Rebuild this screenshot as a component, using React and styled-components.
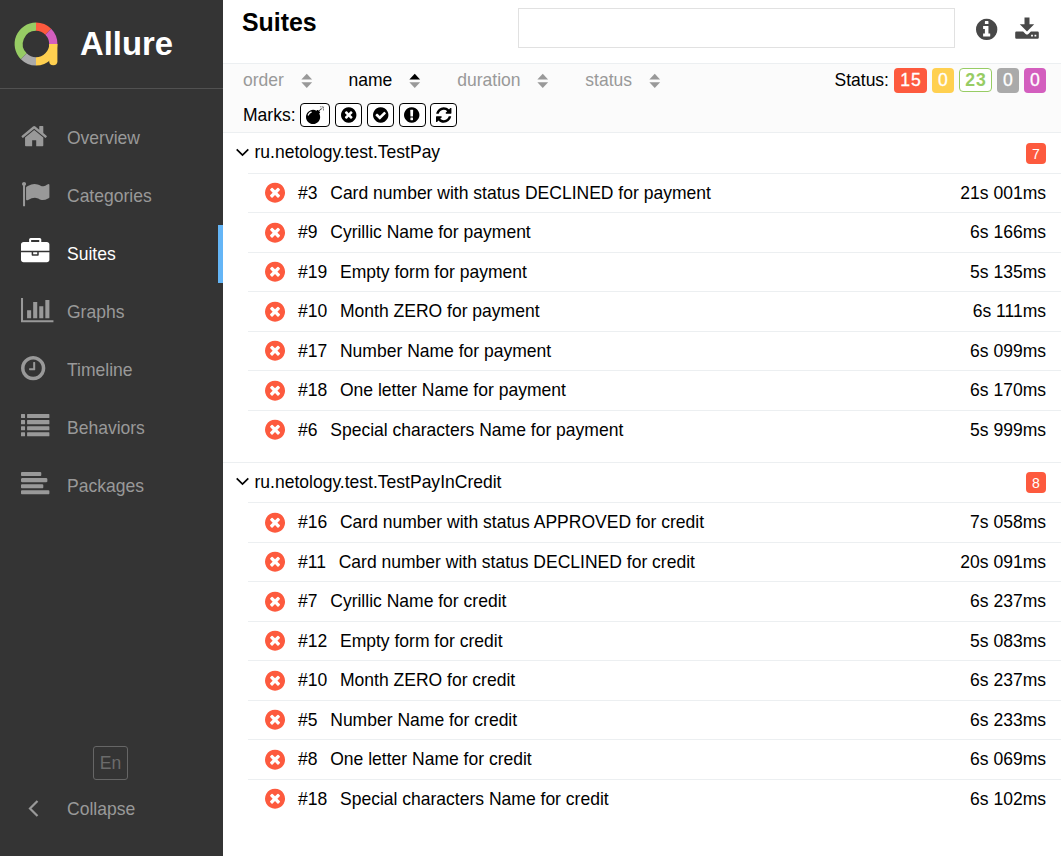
import React from 'react';
import styled, { createGlobalStyle } from 'styled-components';

const RED = '#fd5a3e';
const YELLOW = '#ffd050';
const GREEN = '#97cc64';
const GRAY = '#aaaaaa';
const PURPLE = '#d35ebe';

const GlobalStyle = createGlobalStyle`
  * { box-sizing: border-box; }
  body { margin: 0; background: #fff; }
  body, button, input { font-family: "Liberation Sans", Arial, sans-serif; }
`;

const DISC = 'M1664 896q0 209-103 385.5t-279.5 279.5-385.5 103-385.5-103-279.5-279.5-103-385.5 103-385.5 279.5-279.5 385.5-103 385.5 103 279.5 279.5 103 385.5z';

/* x = left edge of the glyph box, w = its advance, both on a 1792-unit em */
const GLYPHS = {
  home: { x: 64, w: 1664, d: 'M1472 992v480q0 26-19 45t-45 19h-384v-384h-256v384h-384q-26 0-45-19t-19-45v-480q0-1 .5-3t.5-3l575-474 575 474q1 2 1 6zm223-69l-62 74q-8 9-21 11h-3q-13 0-21-7l-692-577-692 577q-12 8-24 7-13-2-21-11l-62-74q-8-10-7-23.5t11-21.5l719-599q32-26 76-26t76 26l244 204v-195q0-14 9-23t23-9h192q14 0 23 9t9 23v408l219 182q10 8 11 21.5t-7 23.5z' },
  flag: { x: 0, w: 1792, d: 'M320 256q0 72-64 110v1266q0 13-9.5 22.5t-22.5 9.5h-64q-13 0-22.5-9.5t-9.5-22.5v-1266q-64-38-64-110 0-53 37.5-90.5t90.5-37.5 90.5 37.5 37.5 90.5zm1472 64v763q0 25-12.5 38.5t-39.5 27.5q-215 116-369 116-61 0-123.5-22t-108.5-48-115.5-48-142.5-22q-192 0-464 146-17 9-33 9-26 0-45-19t-19-45v-742q0-32 31-55 21-14 79-43 236-120 421-120 107 0 200 29t219 88q38 19 88 19 54 0 117.5-21t110-47 88-47 54.5-21q26 0 45 19t19 45z' },
  briefcase: { x: 0, w: 1792, d: 'M640 256h512v-128h-512v128zm1152 640v480q0 66-47 113t-113 47h-1472q-66 0-113-47t-47-113v-480h672v160q0 26 19 45t45 19h320q26 0 45-19t19-45v-160h672zm-768 0v128h-256v-128h256zm768-480v384h-1792v-384q0-66 47-113t113-47h352v-160q0-40 28-68t68-28h576q40 0 68 28t28 68v160h352q66 0 113 47t47 113z' },
  chart: { x: 0, w: 2048, d: 'M640 896v512h-256v-512h256zm384-512v1024h-256v-1024h256zm1024 1152v128h-2048v-1536h128v1408h1920zm-640-896v768h-256v-768h256zm384-384v1152h-256v-1152h256z' },
  clock: { x: 128, w: 1536, d: 'M1024 544v448q0 14-9 23t-23 9h-320q-14 0-23-9t-9-23v-64q0-14 9-23t23-9h224v-352q0-14 9-23t23-9h64q14 0 23 9t9 23zm416 352q0-148-73-273t-198-198-273-73-273 73-198 198-73 273 73 273 198 198 273 73 273-73 198-198 73-273zM' + DISC.slice(1) },
  list: { x: 0, w: 1792, d: [192, 576, 960, 1344].map((y) => `M32 ${y - 64}h192q32 0 32 32v192q0 32-32 32h-192q-32 0-32-32v-192q0-32 32-32zM416 ${y - 64}h1344q32 0 32 32v192q0 32-32 32h-1344q-32 0-32-32v-192q0-32 32-32z`).join('') },
  align: { x: 0, w: 1792, d: 'M1792 1344v128q0 26-19 45t-45 19h-1664q-26 0-45-19t-19-45v-128q0-26 19-45t45-19h1664q26 0 45 19t19 45zm-384-384v128q0 26-19 45t-45 19h-1280q-26 0-45-19t-19-45v-128q0-26 19-45t45-19h1280q26 0 45 19t19 45zm256-384v128q0 26-19 45t-45 19h-1536q-26 0-45-19t-19-45v-128q0-26 19-45t45-19h1536q26 0 45 19t19 45zm-384-384v128q0 26-19 45t-45 19h-1152q-26 0-45-19t-19-45v-128q0-26 19-45t45-19h1152q26 0 45 19t19 45z' },
  bomb: { x: 0, w: 1792, spark: 'M1390 80H1740V450M1440 390 1740 90', d: 'M571 589q-10-25-34-35t-49 0q-108 44-191 127t-127 191q-10 25 0 49t35 34q13 5 24 5 42 0 60-40 34-84 98.5-148.5t148.5-98.5q25-11 35-35t0-49zm942-356l46 46-244 243 68 68q19 19 19 45.5t-19 45.5l-64 64q89 161 89 343 0 143-55.5 273.5t-150 225-225 150-273.5 55.5-273.5-55.5-225-150-150-225-55.5-273.5 55.5-273.5 150-225 225-150 273.5-55.5q182 0 343 89l64-64q19-19 45.5-19t45.5 19l68 68z' },
  times: { x: 128, w: 1536, d: 'M1277 1122q0-26-19-45l-181-181 181-181q19-19 19-45 0-27-19-46l-90-90q-19-19-46-19-26 0-45 19l-181 181-181-181q-19-19-45-19-27 0-46 19l-90 90q-19 19-19 46 0 26 19 45l181 181-181 181q-19 19-19 45 0 27 19 46l90 90q19 19 46 19 26 0 45-19l181-181 181 181q19 19 45 19 27 0 46-19l90-90q19-19 19-46z' + DISC },
  check: { x: 128, w: 1536, d: 'M1412 734q0-28-18-46l-91-90q-19-19-45-19t-45 19l-408 407-226-226q-19-19-45-19t-45 19l-91 90q-18 18-18 46 0 27 18 45l362 362q19 19 45 19 27 0 46-19l543-543q18-18 18-45z' + DISC },
  exclamation: { x: 128, w: 1536, d: 'M896 128q209 0 385.5 103t279.5 279.5 103 385.5-103 385.5-279.5 279.5-385.5 103-385.5-103-279.5-279.5-103-385.5 103-385.5 279.5-279.5 385.5-103zm128 1247v-190q0-14-9-23.5t-22-9.5h-192q-13 0-23 10t-10 23v190q0 13 10 23t23 10h192q13 0 22-9.5t9-23.5zm-2-344l18-621q0-12-10-18-10-8-24-8h-220q-14 0-24 8-10 6-10 18l17 621q0 10 10 17.5t24 7.5h185q14 0 23.5-7.5t10.5-17.5z' },
  refresh: { x: 128, w: 1536, d: 'M1639 1056q0 5-1 7-64 268-268 434.5t-478 166.5q-146 0-282.5-55t-243.5-157l-129 129q-19 19-45 19t-45-19-19-45v-448q0-26 19-45t45-19h448q26 0 45 19t19 45-19 45l-137 137q71 66 161 102t187 36q134 0 250-65t186-179q11-17 53-117 8-23 30-23h192q13 0 22.5 9.5t9.5 22.5zm25-800v448q0 26-19 45t-45 19h-448q-26 0-45-19t-19-45 19-45l138-138q-148-137-349-137-134 0-250 65t-186 179q-11 17-53 117-8 23-30 23h-199q-13 0-22.5-9.5t-9.5-22.5v-7q65-268 270-434.5t480-166.5q146 0 284 55.5t245 156.5l130-129q19-19 45-19t45 19 19 45z' },
  info: { x: 128, w: 1536, d: 'M1152 1376v-160q0-14-9-23t-23-9h-96v-512q0-14-9-23t-23-9h-320q-14 0-23 9t-9 23v160q0 14 9 23t23 9h96v320h-96q-14 0-23 9t-9 23v160q0 14 9 23t23 9h448q14 0 23-9t9-23zm-128-896v-160q0-14-9-23t-23-9h-192q-14 0-23 9t-9 23v160q0 14 9 23t23 9h192q14 0 23-9t9-23z' + DISC },
};

const Svg = styled.svg`
  display: block;
  flex: none;
  overflow: visible;
`;

function Glyph({ name, size, color = 'currentColor' }) {
  const { x, w, d, spark } = GLYPHS[name];
  return (
    <Svg width={(w / 1792) * size} height={size} viewBox={`${x} 0 ${w} 1792`} fill={color} fillRule="evenodd">
      <path d={d} />
      {spark && <path d={spark} fill="none" stroke="#666" strokeWidth="80" strokeDasharray="150 40" />}
    </Svg>
  );
}

const Page = styled.div`
  display: flex;
  height: 856px;
  width: 1061px;
  overflow: hidden;
  color: #000;
  font-size: 17.52px;
  line-height: 21px;
`;

const Sidebar = styled.nav`
  display: flex;
  flex-direction: column;
  flex: none;
  width: 223px;
  background: #343434;
  color: #999;
`;

const Brand = styled.div`
  display: flex;
  align-items: center;
  gap: 22px;
  height: 89px;
  padding: 0 0 1px 14px;
  border-bottom: 1px solid #515151;
  color: #fff;
  font-size: 32.8px;
  font-weight: 700;
`;

const BrandName = styled.span`
  line-height: 40px;
`;

const Menu = styled.div`
  padding-top: 20px;
  flex: 1;
`;

const MenuItem = styled.a`
  display: flex;
  align-items: center;
  height: 58px;
  padding-left: 21.4px;
  border-right: 5px solid ${(p) => (p.$active ? '#64b5f6' : 'transparent')};
  color: ${(p) => (p.$active ? '#fff' : '#999')};
`;

const MenuIcon = styled.span`
  width: 45.6px;
  padding-bottom: 4px;
`;

const MenuFooter = styled.div`
  display: flex;
  flex-direction: column;
  height: 110px;
`;

const Language = styled.button`
  align-self: flex-start;
  width: 35px;
  height: 34px;
  margin-left: 93px;
  padding: 0;
  border: 1px solid #666;
  border-radius: 3px;
  background: transparent;
  color: #6b6b6b;
  font-size: 17.52px;
`;

const Collapse = styled.a`
  display: flex;
  align-items: center;
  gap: 28px;
  height: 58px;
  padding-left: 28px;
`;

const CollapseArrow = styled.span`
  padding-bottom: 2px;
`;

const Main = styled.main`
  flex: 1;
  min-width: 0;
`;

const Header = styled.header`
  display: flex;
  height: 63px;
  padding: 8px 22px 0 19px;
`;

const Title = styled.h1`
  flex: 1;
  margin: 0;
  font-size: 24.9px;
  line-height: 29px;
`;

const Search = styled.input`
  flex: none;
  width: 437px;
  height: 40px;
  padding: 0 10px;
  border: 1px solid #e1e1e1;
  background: #fff;
`;

const HeaderIcons = styled.div`
  display: flex;
  flex: none;
  align-items: flex-start;
  justify-content: space-between;
  width: 63px;
  padding-top: 8.5px;
  margin-left: 21px;
  padding-left: 0.3px;
`;

const Toolbar = styled.section`
  height: 69.45px;
  padding: 3px 15px 0 20px;
  border-top: 1px solid #eceff1;
  background: #fbfbfb;
`;

const ToolbarRow = styled.div`
  display: flex;
  align-items: center;
  height: ${(p) => p.$height}px;
`;

const Sorter = styled.span`
  display: flex;
  align-items: center;
  justify-content: space-between;
  width: ${(p) => p.$width}px;
  margin-right: ${(p) => p.$gap}px;
  color: ${(p) => (p.$active ? '#000' : '#999')};
`;

const StatusGroup = styled.div`
  display: flex;
  align-items: center;
  gap: 5px;
  margin-left: auto;
`;

const StatusBadge = styled.span`
  width: ${(p) => p.$width}px;
  height: 25px;
  padding-left: 1px;
  border-radius: 4px;
  background: ${(p) => p.$color};
  color: #fff;
  text-align: center;
  letter-spacing: 1px;
  font-size: 17.6px;
  line-height: 25px;
  -webkit-text-stroke: 0.3px #fff;
`;

const OutlinedBadge = styled(StatusBadge)`
  height: 24px;
  margin-bottom: 1px;
  border: 1px solid ${(p) => p.$color};
  background: #fff;
  color: ${(p) => p.$color};
  font-weight: 700;
  line-height: 23px;
  -webkit-text-stroke: 0;
`;

const MarksLabel = styled.span`
  width: 52px;
`;

const Marks = styled.div`
  display: flex;
  gap: 4.86px;
  margin-left: 5px;
`;

const Mark = styled.span`
  display: flex;
  align-items: center;
  justify-content: center;
  width: ${(p) => p.$width}px;
  height: 24px;
  border: 1px solid #000;
  border-radius: 4px;
  background: #fff;
`;

const Group = styled.section`
  padding-bottom: 12.75px;
  border-top: 1px solid #eceff1;
`;

const GroupHeader = styled.div`
  display: flex;
  align-items: center;
  height: 39.35px;
  padding: 0 15px 2px 13px;
`;

const GroupName = styled.span`
  flex: 1;
  margin-left: 5.5px;
  padding-top: 0.7px;
`;

const Count = styled.span`
  width: 20px;
  height: 21px;
  margin-top: 2.4px;
  border-radius: 4px;
  background: ${RED};
  color: #fff;
  font-size: 14.1px;
  line-height: 22px;
  text-align: center;
`;

const Row = styled.div`
  display: flex;
  align-items: center;
  height: 39.5px;
  margin-left: 25px;
  padding: 0 15px 0 17px;
  border-top: 1px solid #eceff1;
`;

const Order = styled.span`
  margin: 0 12.7px 0 13px;
`;

const Name = styled.span`
  flex: 1;
`;

function Logo() {
  const arc = (from, to, color) => {
    const point = (deg) => {
      const a = (deg * Math.PI) / 180;
      return `${22 + 17.3 * Math.cos(a)} ${22 + 17.3 * Math.sin(a)}`;
    };
    const large = to - from > 180 ? 1 : 0;
    return <path d={`M${point(from)}A17.3 17.3 0 ${large} 1 ${point(to)}`} stroke={color} />;
  };
  return (
    <Svg width="44" height="44" viewBox="0 0 44 44" fill="none" strokeWidth="8.2">
      {arc(135, 270, GREEN)}
      {arc(270, 315, RED)}
      {arc(315, 360, PURPLE)}
      {arc(90, 135, GRAY)}
      {arc(0, 90, YELLOW)}
      <path d="M35.2 22H43.4V39.2a4.1 4.1 0 0 1-8.2 0z" fill={YELLOW} />
    </Svg>
  );
}

function SortArrows({ active }) {
  return (
    <Svg width="11.5" height="16" viewBox="0 0 12 16" preserveAspectRatio="none">
      <path d="M.4 6.5 6 .8l5.6 5.7z" fill={active ? '#000' : '#999'} />
      <path d="M.4 9.3 6 15l5.6-5.7z" fill="#999" />
    </Svg>
  );
}

function DownloadIcon() {
  return (
    <Svg width="24" height="22" viewBox="0 0 24 22" fill="#484848">
      <path d="M9.5 .5h5v6.7h4.7L12 14.6 4.8 7.2h4.7z" />
      <path fillRule="evenodd" d="M1.4 14.6h6.7l2.5 2.3q1.4 1.2 2.8 0l2.5-2.3h6.7q1.2 0 1.2 1.2v4.8q0 1.2-1.2 1.2H1.4q-1.2 0-1.2-1.2v-4.8q0-1.2 1.2-1.2zM16.1 17.7v1.8h1.8v-1.8zM19.5 17.7v1.8h1.8v-1.8z" />
    </Svg>
  );
}

const MENU = [
  ['home', 'Overview'],
  ['flag', 'Categories'],
  ['briefcase', 'Suites'],
  ['chart', 'Graphs'],
  ['clock', 'Timeline'],
  ['list', 'Behaviors'],
  ['align', 'Packages'],
];

const SORTERS = [
  ['order', 69.2, 36.3],
  ['name', 72, 36.8],
  ['duration', 91.7, 36.3],
  ['status', 75.2, 0],
];

const MARKS = [
  ['bomb', 30],
  ['times', 27],
  ['check', 27],
  ['exclamation', 27],
  ['refresh', 27],
];

const SUITES = [
  {
    name: 'ru.netology.test.TestPay',
    tests: [
      [3, 'Card number with status DECLINED for payment', '21s 001ms'],
      [9, 'Cyrillic Name for payment', '6s 166ms'],
      [19, 'Empty form for payment', '5s 135ms'],
      [10, 'Month ZERO for payment', '6s 111ms'],
      [17, 'Number Name for payment', '6s 099ms'],
      [18, 'One letter Name for payment', '6s 170ms'],
      [6, 'Special characters Name for payment', '5s 999ms'],
    ],
  },
  {
    name: 'ru.netology.test.TestPayInCredit',
    tests: [
      [16, 'Card number with status APPROVED for credit', '7s 058ms'],
      [11, 'Card number with status DECLINED for credit', '20s 091ms'],
      [7, 'Cyrillic Name for credit', '6s 237ms'],
      [12, 'Empty form for credit', '5s 083ms'],
      [10, 'Month ZERO for credit', '6s 237ms'],
      [5, 'Number Name for credit', '6s 233ms'],
      [8, 'One letter Name for credit', '6s 069ms'],
      [18, 'Special characters Name for credit', '6s 102ms'],
    ],
  },
];

export default function App() {
  return (
    <Page>
      <GlobalStyle />
      <Sidebar>
        <Brand>
          <Logo />
          <BrandName>Allure</BrandName>
        </Brand>
        <Menu>
          {MENU.map(([icon, label]) => (
            <MenuItem key={label} $active={label === 'Suites'}>
              <MenuIcon><Glyph name={icon} size={28.4} /></MenuIcon>
              {label}
            </MenuItem>
          ))}
        </Menu>
        <MenuFooter>
          <Language>En</Language>
          <Collapse>
            <CollapseArrow>
              <Svg width="11" height="17" viewBox="0 0 11 17" fill="none" stroke="#999" strokeWidth="2.2">
                <path d="M9.5 1 2 8.5 9.5 16" />
              </Svg>
            </CollapseArrow>
            Collapse
          </Collapse>
        </MenuFooter>
      </Sidebar>
      <Main>
        <Header>
          <Title>Suites</Title>
          <Search />
          <HeaderIcons>
            <Glyph name="info" size={24.9} color="#484848" />
            <DownloadIcon />
          </HeaderIcons>
        </Header>
        <Toolbar>
          <ToolbarRow $height={27}>
            {SORTERS.map(([label, width, gap]) => (
              <Sorter key={label} $width={width} $gap={gap} $active={label === 'name'}>
                {label}
                <SortArrows active={label === 'name'} />
              </Sorter>
            ))}
            <StatusGroup>
              <span>Status:</span>
              <StatusBadge $width={33} $color={RED}>15</StatusBadge>
              <StatusBadge $width={22} $color={YELLOW}>0</StatusBadge>
              <OutlinedBadge $width={33} $color={GREEN}>23</OutlinedBadge>
              <StatusBadge $width={22} $color={GRAY}>0</StatusBadge>
              <StatusBadge $width={22} $color={PURPLE}>0</StatusBadge>
            </StatusGroup>
          </ToolbarRow>
          <ToolbarRow $height={42}>
            <MarksLabel>Marks:</MarksLabel>
            <Marks>
              {MARKS.map(([name, width]) => (
                <Mark key={name} $width={width}>
                  <Glyph name={name} size={18} />
                </Mark>
              ))}
            </Marks>
          </ToolbarRow>
        </Toolbar>
        {SUITES.map((suite) => (
          <Group key={suite.name}>
            <GroupHeader>
              <Svg width="13" height="9" viewBox="0 0 13 9" fill="none" stroke="#000" strokeWidth="1.7">
                <path d="M.7 1.3 6.5 7.1 12.3 1.3" />
              </Svg>
              <GroupName>{suite.name}</GroupName>
              <Count>{suite.tests.length}</Count>
            </GroupHeader>
            {suite.tests.map(([order, name, time]) => (
              <Row key={name}>
                <Glyph name="times" size={23.4} color={RED} />
                <Order>#{order}</Order>
                <Name>{name}</Name>
                <span>{time}</span>
              </Row>
            ))}
          </Group>
        ))}
      </Main>
    </Page>
  );
}
